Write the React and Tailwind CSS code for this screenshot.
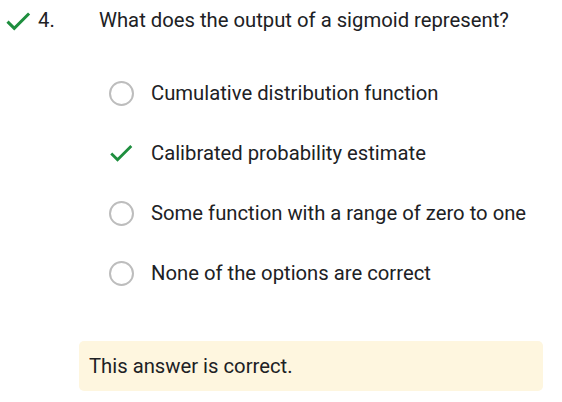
import { } from 'react'

const OPTIONS = [
  { label: 'Cumulative distribution function', picked: false },
  { label: 'Calibrated probability estimate', picked: true },
  { label: 'Some function with a range of zero to one', picked: false },
  { label: 'None of the options are correct', picked: false },
]

function Check({ className }) {
  return (
    <svg viewBox="0 0 24 24" className={className} fill="none">
      <path d="M3 12.5l5.8 5.8L21.5 5.6" stroke="#1e8e3e" strokeWidth="2.6" strokeLinecap="butt" strokeLinejoin="miter" />
    </svg>
  )
}

export default function App() {
  return (
    <div className="w-[562px] h-[402px] bg-white text-[#202124] font-['Roboto',sans-serif] text-[20.25px] overflow-hidden">
      <div className="flex items-center pt-[5px] h-[36px]">
        <Check className="w-[28px] h-[28px] ml-[4px]" />
        <span className="ml-[6px] w-[61px]">4.</span>
        <span>What does the output of a sigmoid represent?</span>
      </div>
      <div className="flex flex-col pl-[108px] pt-[27px]">
        {OPTIONS.map(o => (
          <div key={o.label} className="flex items-center h-[60px]">
            <div className="w-[26px] h-[26px] flex items-center justify-center">
              {o.picked ? (
                <Check className="w-[26px] h-[26px]" />
              ) : (
                <div className="w-[25px] h-[25px] rounded-full border-2 border-[#bdbdbd]" />
              )}
            </div>
            <span className="ml-[17px]">{o.label}</span>
          </div>
        ))}
      </div>
      <div className="ml-[79px] mt-[38px] w-[464px] h-[50px] rounded-[5px] bg-[#fef6df] flex items-center pl-[10px]">
        This answer is correct.
      </div>
    </div>
  )
}
